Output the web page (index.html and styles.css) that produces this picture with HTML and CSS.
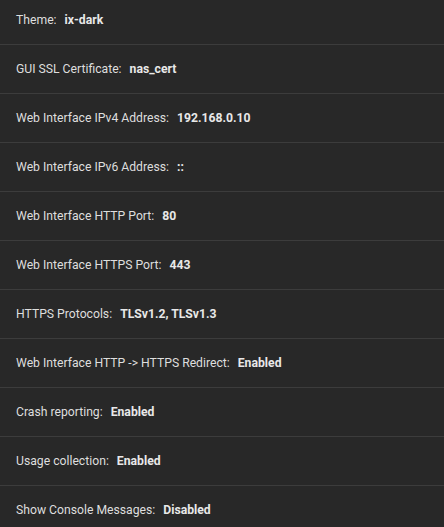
FILE: index.html
```html
<!DOCTYPE html>
<html>
<head>
<meta charset="utf-8">
<link rel="stylesheet" href="styles.css">
</head>
<body>
<ul class="list">
  <li class="row"><span class="label">Theme:</span><span class="value">ix-dark</span></li>
  <li class="row"><span class="label">GUI SSL Certificate:</span><span class="value">nas_cert</span></li>
  <li class="row"><span class="label">Web Interface IPv4 Address:</span><span class="value">192.168.0.10</span></li>
  <li class="row"><span class="label">Web Interface IPv6 Address:</span><span class="value">::</span></li>
  <li class="row"><span class="label">Web Interface HTTP Port:</span><span class="value">80</span></li>
  <li class="row"><span class="label">Web Interface HTTPS Port:</span><span class="value">443</span></li>
  <li class="row"><span class="label">HTTPS Protocols:</span><span class="value">TLSv1.2, TLSv1.3</span></li>
  <li class="row"><span class="label">Web Interface HTTP -&gt; HTTPS Redirect:</span><span class="value">Enabled</span></li>
  <li class="row"><span class="label">Crash reporting:</span><span class="value">Enabled</span></li>
  <li class="row"><span class="label">Usage collection:</span><span class="value">Enabled</span></li>
  <li class="row"><span class="label">Show Console Messages:</span><span class="value">Disabled</span></li>
</ul>
</body>
</html>
```
FILE: styles.css
```css
html, body {
  margin: 0;
  padding: 0;
  background: #282828;
  overflow: hidden;
}
body {
  font-family: Roboto, "Liberation Sans", sans-serif;
  font-size: 12.2px;
  color: #e0e0e0;
}
.list {
  list-style: none;
  margin: -4px 0 0 0;
  padding: 0;
}
.row {
  height: 48px;
  display: flex;
  align-items: center;
  padding: 0 16px;
  border-bottom: 1px solid #3c3c3c;
}
.label {
  color: #dedede;
}
.value {
  margin-left: 8px;
  font-weight: 700;
  color: #e8e8e8;
}
```
